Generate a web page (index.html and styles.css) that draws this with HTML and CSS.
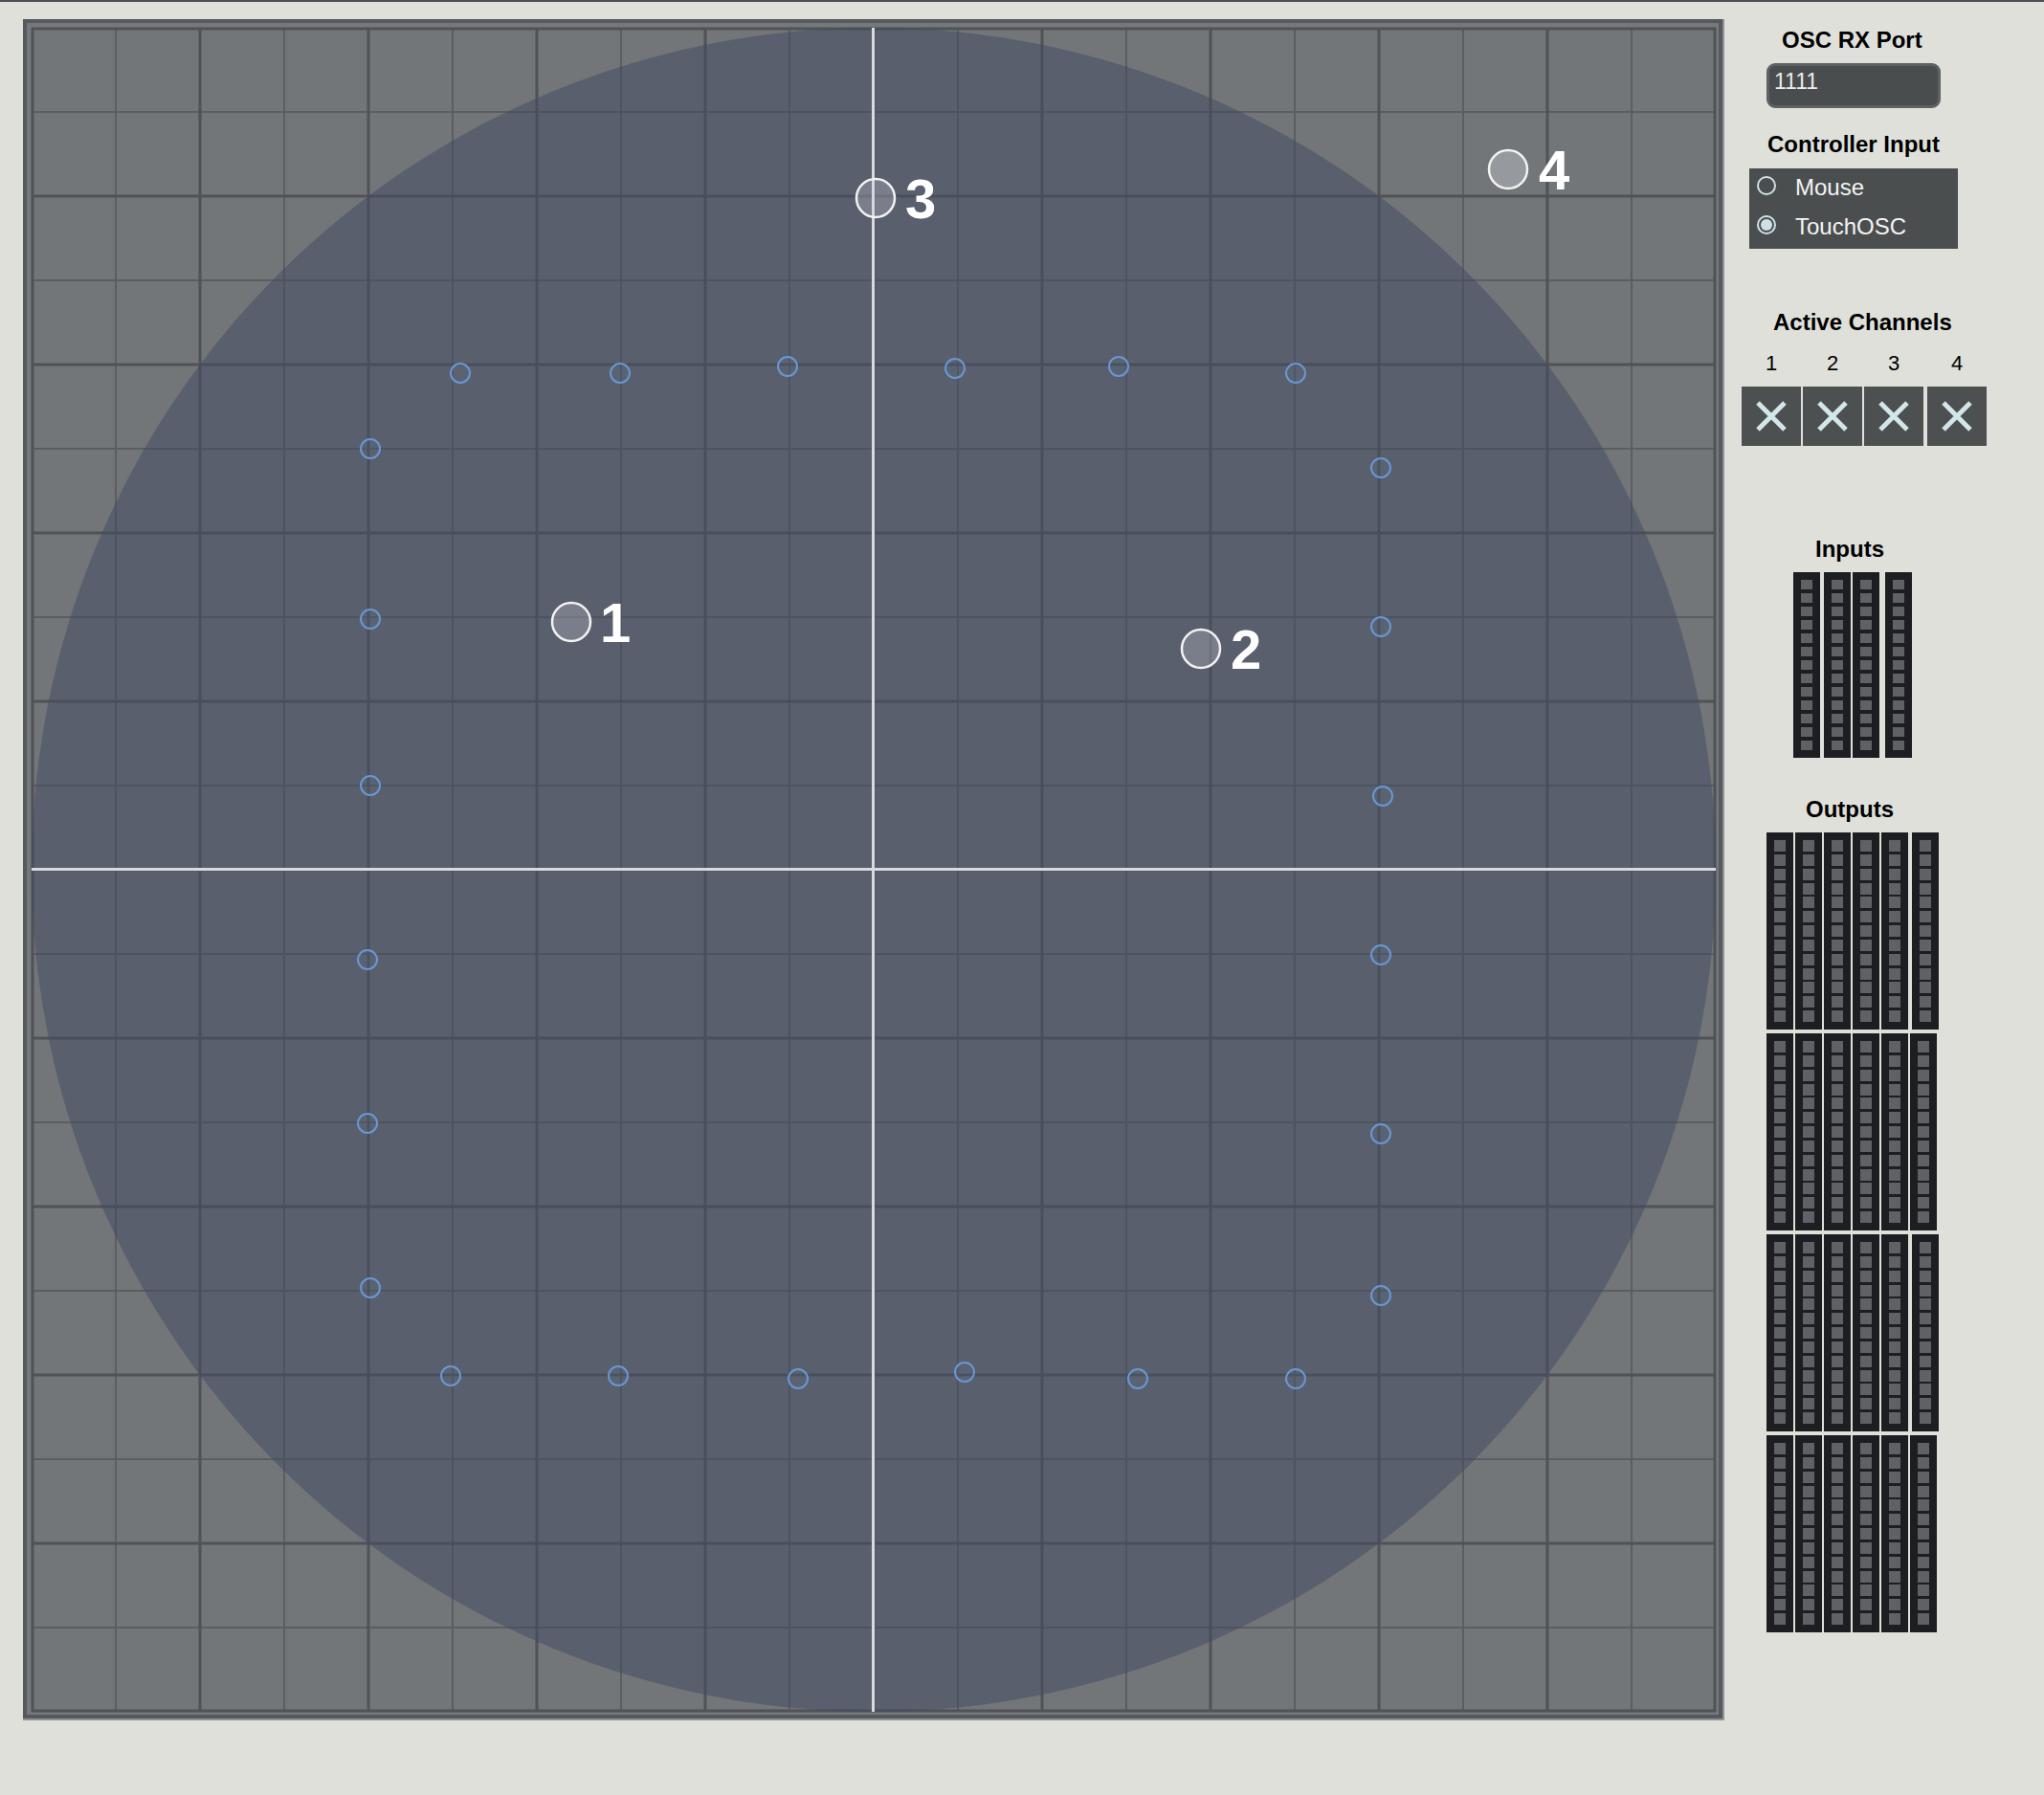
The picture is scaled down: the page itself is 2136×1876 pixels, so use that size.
FILE: index.html
```html
<!DOCTYPE html>
<html lang="en">
<head>
<meta charset="utf-8">
<title>Spatial Panner</title>
<link rel="stylesheet" href="styles.css">
</head>
<body>
<div class="topbar"></div>
<main class="app">
  <div class="pad-wrap">
    <svg class="pad" width="1778" height="1778" viewBox="0 0 1778 1778" xmlns="http://www.w3.org/2000/svg">
      <rect x="0" y="0" width="1778" height="1778" fill="#8f9193"/>
      <rect x="0" y="0" width="1776" height="1776" fill="#56595d"/>
      <rect x="4" y="4" width="1768" height="1768" fill="#76797c"/>
      <rect x="9" y="9" width="1760" height="1760" fill="#727679"/>
      <path class="grid-thin" d="M97 9V1769M273 9V1769M449 9V1769M625 9V1769M801 9V1769M977 9V1769M1153 9V1769M1329 9V1769M1505 9V1769M1681 9V1769M9 97H1769M9 273H1769M9 449H1769M9 625H1769M9 801H1769M9 977H1769M9 1153H1769M9 1329H1769M9 1505H1769M9 1681H1769"/>
      <path class="grid-thick" d="M10 9V1769M185 9V1769M361 9V1769M537 9V1769M713 9V1769M889 9V1769M1065 9V1769M1241 9V1769M1417 9V1769M1593 9V1769M1768 9V1769M9 10H1769M9 185H1769M9 361H1769M9 537H1769M9 713H1769M9 889H1769M9 1065H1769M9 1241H1769M9 1417H1769M9 1593H1769M9 1768H1769"/>
      <circle class="field" cx="889" cy="889" r="880"/>
      <path class="axis" d="M888.5 9V1769M9 888.5H1769"/>
      <g class="speakers">
        <circle cx="457" cy="370" r="10"/>
        <circle cx="624" cy="370" r="10"/>
        <circle cx="799" cy="363" r="10"/>
        <circle cx="974" cy="365" r="10"/>
        <circle cx="1145" cy="363" r="10"/>
        <circle cx="1330" cy="370" r="10"/>
        <circle cx="363" cy="449" r="10"/>
        <circle cx="363" cy="627" r="10"/>
        <circle cx="363" cy="801" r="10"/>
        <circle cx="360" cy="983" r="10"/>
        <circle cx="360" cy="1154" r="10"/>
        <circle cx="363" cy="1326" r="10"/>
        <circle cx="1419" cy="469" r="10"/>
        <circle cx="1419" cy="635" r="10"/>
        <circle cx="1421" cy="812" r="10"/>
        <circle cx="1419" cy="978" r="10"/>
        <circle cx="1419" cy="1165" r="10"/>
        <circle cx="1419" cy="1334" r="10"/>
        <circle cx="447" cy="1418" r="10"/>
        <circle cx="622" cy="1418" r="10"/>
        <circle cx="810" cy="1421" r="10"/>
        <circle cx="984" cy="1414" r="10"/>
        <circle cx="1165" cy="1421" r="10"/>
        <circle cx="1330" cy="1421" r="10"/>
      </g>
      <g class="sources">
        <circle cx="573" cy="630" r="20"/>
        <circle cx="1231" cy="658" r="20"/>
        <circle cx="891" cy="187" r="20"/>
        <circle class="outside" cx="1552" cy="157" r="20"/>
      </g>
      <g class="source-labels">
        <text x="603" y="651">1</text>
        <text x="1262" y="679">2</text>
        <text x="922" y="208">3</text>
        <text x="1584" y="178">4</text>
      </g>
    </svg>
  </div>

  <aside class="side">
    <h2 class="title t-osc">OSC RX Port</h2>
    <div class="port">1111</div>

    <h2 class="title t-ctrl">Controller Input</h2>
    <div class="radios">
      <div class="radio-row"><span class="radio"></span><span class="radio-label">Mouse</span></div>
      <div class="radio-row"><span class="radio on"></span><span class="radio-label">TouchOSC</span></div>
    </div>

    <h2 class="title t-active">Active Channels</h2>
    <div class="channels">
      <div class="ch-nums">
        <span class="ch-num">1</span>
        <span class="ch-num">2</span>
        <span class="ch-num">3</span>
        <span class="ch-num ch-last">4</span>
      </div>
      <div class="ch-boxes">
        <span class="ch-box"><svg width="62" height="62" viewBox="0 0 62 62"><path d="M17 17L45 45M45 17L17 45"/></svg></span>
        <span class="ch-box"><svg width="62" height="62" viewBox="0 0 62 62"><path d="M17 17L45 45M45 17L17 45"/></svg></span>
        <span class="ch-box"><svg width="62" height="62" viewBox="0 0 62 62"><path d="M17 17L45 45M45 17L17 45"/></svg></span>
        <span class="ch-box ch-last"><svg width="62" height="62" viewBox="0 0 62 62"><path d="M17 17L45 45M45 17L17 45"/></svg></span>
      </div>
    </div>

    <h2 class="title t-inputs">Inputs</h2>
    <div class="meters-in">
      <div class="meter in"><div class="cells"></div></div>
      <div class="meter in gap4"><div class="cells"></div></div>
      <div class="meter in gap2"><div class="cells"></div></div>
      <div class="meter in gap6"><div class="cells"></div></div>
    </div>

    <h2 class="title t-outputs">Outputs</h2>
    <div class="meters-out">
      <div class="out-row">
        <div class="meter out"><div class="cells"></div></div>
        <div class="meter out gap2"><div class="cells"></div></div>
        <div class="meter out gap2"><div class="cells"></div></div>
        <div class="meter out gap2"><div class="cells"></div></div>
        <div class="meter out gap2"><div class="cells"></div></div>
        <div class="meter out gap4"><div class="cells"></div></div>
      </div>
      <div class="out-row">
        <div class="meter out"><div class="cells"></div></div>
        <div class="meter out gap2"><div class="cells"></div></div>
        <div class="meter out gap2"><div class="cells"></div></div>
        <div class="meter out gap2"><div class="cells"></div></div>
        <div class="meter out gap2"><div class="cells"></div></div>
        <div class="meter out gap2"><div class="cells"></div></div>
      </div>
      <div class="out-row">
        <div class="meter out"><div class="cells"></div></div>
        <div class="meter out gap2"><div class="cells"></div></div>
        <div class="meter out gap2"><div class="cells"></div></div>
        <div class="meter out gap2"><div class="cells"></div></div>
        <div class="meter out gap2"><div class="cells"></div></div>
        <div class="meter out gap4"><div class="cells"></div></div>
      </div>
      <div class="out-row">
        <div class="meter out"><div class="cells"></div></div>
        <div class="meter out gap2"><div class="cells"></div></div>
        <div class="meter out gap2"><div class="cells"></div></div>
        <div class="meter out gap2"><div class="cells"></div></div>
        <div class="meter out gap2"><div class="cells"></div></div>
        <div class="meter out gap2"><div class="cells"></div></div>
      </div>
    </div>
  </aside>
</main>
</body>
</html>
```

FILE: styles.css
```css
html, body {
  margin: 0;
  padding: 0;
}

body {
  background: #dfe0da;
  font-family: "Liberation Sans", Arial, Helvetica, sans-serif;
  color: #000;
  width: 2136px;
  height: 1876px;
  overflow: hidden;
}

.topbar {
  height: 2px;
  background: #4b4e52;
}

.app {
  display: flex;
  align-items: flex-start;
}

/* ---------- pad ---------- */

.pad-wrap {
  margin: 18px 0 0 24px;
  width: 1778px;
  height: 1778px;
  flex: none;
}

.pad {
  display: block;
}

.grid-thin {
  stroke: #5a5d61;
  stroke-width: 2;
  fill: none;
}

.grid-thick {
  stroke: #4f5256;
  stroke-width: 3;
  fill: none;
}

.field {
  fill: rgba(68, 74, 96, 0.52);
}

.axis {
  stroke: #d8dadf;
  stroke-width: 3;
  fill: none;
}

.speakers circle {
  fill: rgba(110, 150, 210, 0.08);
  stroke: #6798d4;
  stroke-width: 2;
}

.sources circle {
  fill: rgba(205, 207, 214, 0.28);
  stroke: #f2f2f2;
  stroke-width: 2.5;
}

.sources circle.outside {
  fill: rgba(205, 207, 214, 0.4);
}

.source-labels text {
  font-family: "Liberation Sans", Arial, sans-serif;
  font-weight: 700;
  font-size: 58px;
  fill: #ffffff;
}

/* ---------- sidebar ---------- */

.side {
  width: 334px;
  flex: none;
  display: flex;
  flex-direction: column;
  align-items: flex-start;
  padding-top: 26px;
}

.title {
  margin: 0;
  font-size: 24px;
  line-height: 28px;
  height: 28px;
  font-weight: 700;
  white-space: nowrap;
}

.t-osc { margin-left: 60px; }
.t-ctrl { margin-left: 45px; margin-top: 24px; }
.t-active { margin-left: 51px; margin-top: 63px; }
.t-inputs { margin-left: 95px; margin-top: 94px; }
.t-outputs { margin-left: 85px; margin-top: 40px; }

.port {
  margin: 10px 0 0 44px;
  box-sizing: border-box;
  width: 182px;
  height: 47px;
  border: 3px solid #5e6164;
  border-radius: 9px;
  background: #4a4d4e;
  color: #ececec;
  font-size: 23px;
  line-height: 27px;
  padding: 3px 0 0 5px;
}

.radios {
  margin: 11px 0 0 26px;
  width: 218px;
  height: 84px;
  background: #4b4e4f;
  display: flex;
  flex-direction: column;
}

.radio-row {
  height: 41px;
  display: flex;
  align-items: center;
  margin-top: -1px;
}

.radio-row + .radio-row {
  margin-top: 0;
}

.radio {
  box-sizing: border-box;
  width: 20px;
  height: 20px;
  margin-left: 8px;
  margin-bottom: 4px;
  border: 2px solid #cfe1e7;
  border-radius: 50%;
  flex: none;
}

.radio.on {
  padding: 2px;
  background: #cfe1e7;
  background-clip: content-box;
}

.radio-label {
  margin-left: 20px;
  color: #f4f4f4;
  font-size: 24px;
  line-height: 28px;
}

.channels {
  margin: 16px 0 0 18px;
}

.ch-nums,
.ch-boxes {
  display: flex;
  gap: 2px;
}

.ch-num {
  width: 62px;
  height: 26px;
  line-height: 26px;
  font-size: 22px;
  text-align: center;
}

.ch-last {
  margin-left: 2px;
}

.ch-boxes {
  margin-top: 11px;
}

.ch-box {
  width: 62px;
  height: 62px;
  background: #4c5050;
  display: block;
}

.ch-box svg {
  display: block;
}

.ch-box path {
  stroke: #d3e6ea;
  stroke-width: 5;
  fill: none;
}

.meters-in {
  margin: 10px 0 0 72px;
  display: flex;
}

.meters-out {
  margin: 10px 0 0 44px;
  display: flex;
  flex-direction: column;
  gap: 4px;
}

.out-row {
  display: flex;
}

.meter {
  box-sizing: border-box;
  width: 28px;
  background: #1c1e21;
  padding: 8px;
}

.gap2 { margin-left: 2px; }
.gap4 { margin-left: 4px; }
.gap6 { margin-left: 6px; }

.meter.in {
  height: 194px;
}

.meter.out {
  height: 206px;
}

.cells {
  width: 12px;
  height: 100%;
}

.meter.in .cells {
  background: repeating-linear-gradient(to bottom, #5f6165 0 10px, transparent 10px 14px);
}

.meter.out .cells {
  background: repeating-linear-gradient(to bottom, #5f6165 0 12px, transparent 12px 14.84px);
}
```
